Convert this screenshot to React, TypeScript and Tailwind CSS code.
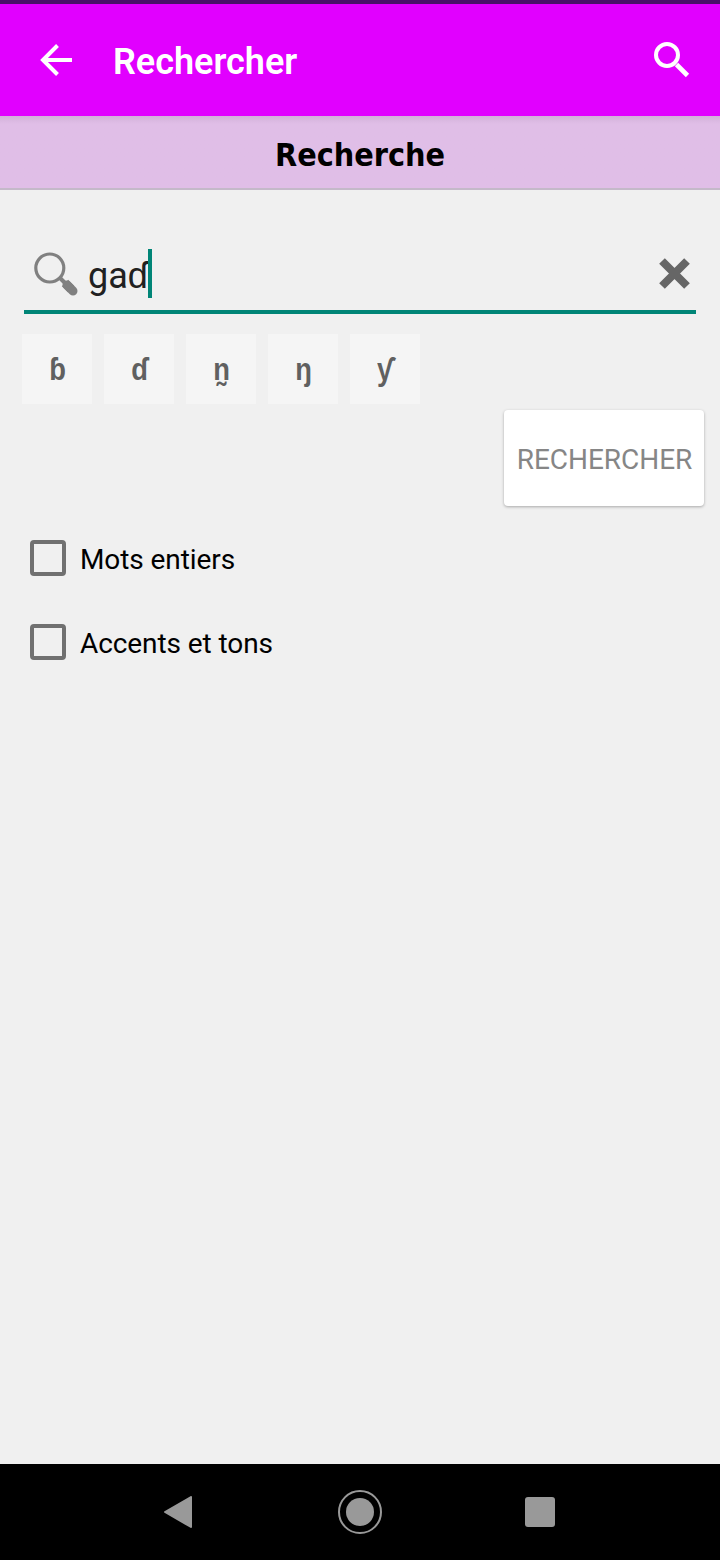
import React from "react";

const keys = ["ɓ", "ɗ", "n̰", "ŋ", "ƴ"];
const options = ["Mots entiers", "Accents et tons"];

const AppBar = () => (
  <header className="flex h-28 shrink-0 items-center bg-[#e100ff] pl-8 pr-6">
    <svg width="48" height="48" viewBox="0 0 48 48" fill="none" stroke="#fff" strokeWidth="4">
      <path d="M40 24H11M25.5 9.5 11 24l14.5 14.5" />
    </svg>
    <h1 className="ml-[33px] mt-[3px] flex-1 text-[36px] leading-[44px] font-semibold text-white">
      Rechercher
    </h1>
    <svg width="48" height="48" viewBox="0 0 48 48" fill="none" stroke="#fff" strokeWidth="4">
      <circle cx="19" cy="19" r="11" />
      <path d="M28.5 28.5 39.5 39.5" strokeWidth="4.6" />
    </svg>
  </header>
);

const SearchField = () => (
  <div className="flex h-[76px] items-center border-b-4 border-[#008577] pl-[10px] pr-1">
    <svg width="44" height="44" viewBox="0 0 44 44" fill="none" stroke="#808080">
      <circle cx="15.8" cy="16" r="14" strokeWidth="3.2" />
      <path d="M26 26l5 5" strokeWidth="4" />
      <path d="M31 31l6 6" strokeWidth="9" />
      <path d="M33 33l6 6" strokeWidth="9" strokeLinecap="round" />
    </svg>
    <div className="ml-[10px] flex flex-1 items-center">
      <span className="mt-[3px] text-[36px] leading-[44px] text-[#212121]">gaɗ</span>
      <span className="mb-[2px] h-[49px] w-1 bg-[#008577]" />
    </div>
    <svg width="34" height="34" viewBox="0 0 34 34" stroke="#666" strokeWidth="8">
      <path d="M4 4l25 25M29 4l-25 25" />
    </svg>
  </div>
);

const NavigationBar = () => (
  <nav className="flex h-24 shrink-0 items-center bg-black pl-[164px]">
    <svg width="28" height="32" viewBox="0 0 28 32" fill="#999" stroke="#999" strokeWidth="2" strokeLinejoin="round">
      <path d="M1 16 27 1v30z" />
    </svg>
    <svg className="ml-[146px]" width="44" height="44" viewBox="0 0 44 44">
      <circle cx="22" cy="22" r="21" fill="none" stroke="#999" strokeWidth="2" />
      <circle cx="22" cy="22" r="14" fill="#999" />
    </svg>
    <div className="ml-[143px] h-[30px] w-[30px] rounded-[3px] bg-[#999]" />
  </nav>
);

const App = () => {
  return (
    <div className="flex h-[1560px] w-[720px] flex-col overflow-hidden bg-[#f0f0f0] font-[Roboto,sans-serif]">
      <div className="h-1 shrink-0 bg-[#4a1068]" />
      <AppBar />
      <div className="flex h-[74px] shrink-0 items-center justify-center border-b-2 border-[#c4b9c9] bg-linear-to-b from-[#d2b1d9] to-[#e0bee7] to-[8px] pt-[5px]">
        <h2 className="font-['DejaVu_Sans_Condensed','DejaVu_Sans',sans-serif] text-[32px] leading-10 font-bold text-black [font-stretch:75%]">
          Recherche
        </h2>
      </div>

      <main className="flex flex-1 flex-col pt-12">
        <div className="px-6">
          <SearchField />
        </div>

        {/* Special characters */}
        <div className="mt-5 flex gap-3 pl-[22px]">
          {keys.map((key) => (
            <button
              key={key}
              className="h-[70px] w-[70px] bg-[#f5f5f5] pt-[2px] font-['Liberation_Sans',sans-serif] text-[31px] leading-[36px] font-bold text-[#606060]"
            >
              <span className="inline-block scale-x-88">{key}</span>
            </button>
          ))}
        </div>

        <button className="mt-[6px] mr-4 h-24 w-[200px] self-end rounded-[4px] bg-white pt-[3px] pl-px text-[28px] tracking-[-0.05px] text-[#868686] shadow-[0_1px_3px_rgba(0,0,0,0.3)]">
          RECHERCHER
        </button>

        <div className="mt-[34px] flex flex-col gap-12 pl-[30px]">
          {options.map((option) => (
            <label key={option} className="flex h-9 items-center">
              <span className="h-9 w-9 rounded-[4px] border-4 border-[#707070]" />
              <span className="ml-[14px] mt-[3px] text-[28px] tracking-[-0.08px] text-black">{option}</span>
            </label>
          ))}
        </div>
      </main>

      <NavigationBar />
    </div>
  );
};

export default App;
